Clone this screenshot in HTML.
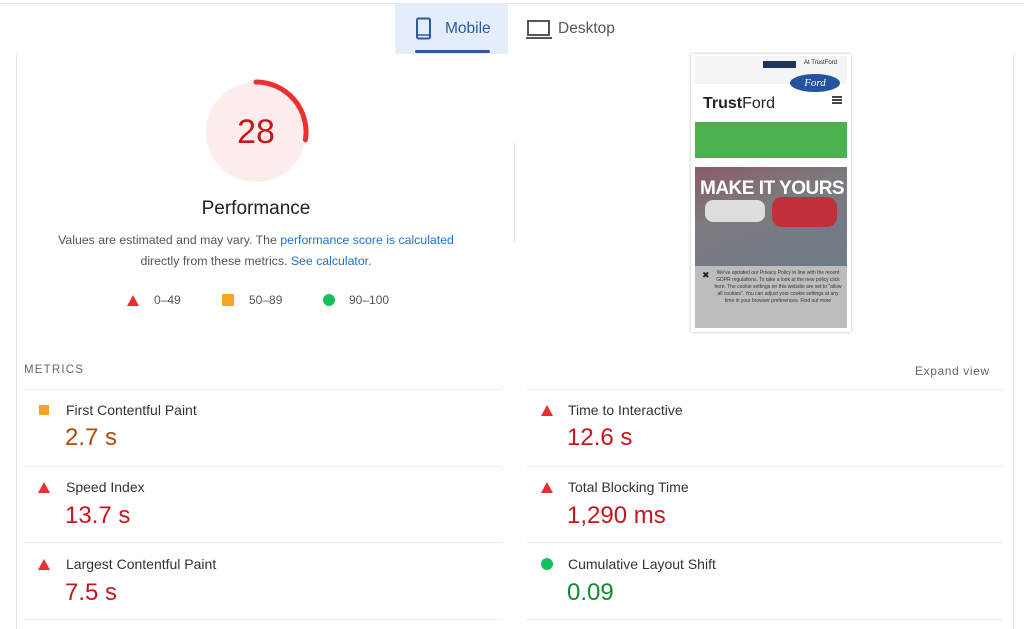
<!DOCTYPE html>
<html><head><style>
body{margin:0;width:1024px;height:629px;background:#fff;position:relative;overflow:hidden;font-family:"Liberation Sans",Arial,sans-serif;}
.a{position:absolute;}
.sep{position:absolute;height:1px;background:#ececec;}
.lbl{position:absolute;font-size:14px;color:#333;}
.val{position:absolute;font-size:24px;}
.red{color:#c5161d}.org{color:#b4470c}.grn{color:#118a2f}
.tri{position:absolute;width:0;height:0;border-left:6px solid transparent;border-right:6px solid transparent;border-bottom:11px solid #eb2f2f;}
</style></head><body>
<div class="a" style="left:0;top:3px;width:1024px;height:1px;background:#e6e6e6"></div>
<div class="a" style="left:16px;top:54px;width:1px;height:575px;background:#e8e8e8"></div>
<div class="a" style="left:1013px;top:54px;width:1px;height:575px;background:#e8e8e8"></div>
<!-- tabs -->
<div class="a" style="left:395px;top:4px;width:113px;height:50px;background:#e4eefa"></div>
<div class="a" style="left:415px;top:50px;width:75px;height:3px;background:#2d5a9e;border-radius:2px"></div>
<svg class="a" style="left:415px;top:17px" width="18" height="24" viewBox="0 0 18 24"><rect x="2" y="1.5" width="13" height="20" rx="1.5" fill="none" stroke="#2d5a9e" stroke-width="2"/><line x1="2" y1="18" x2="15" y2="18" stroke="#2d5a9e" stroke-width="1.5"/></svg>
<div class="a" style="left:445px;top:20px;font-size:15.5px;color:#2d5a9e">Mobile</div>
<svg class="a" style="left:526px;top:20px" width="26" height="20" viewBox="0 0 26 20"><rect x="2" y="1" width="21" height="14" fill="none" stroke="#555" stroke-width="2"/><line x1="0" y1="18" x2="26" y2="18" stroke="#555" stroke-width="2"/></svg>
<div class="a" style="left:558px;top:20px;font-size:15.5px;color:#555">Desktop</div>
<!-- gauge -->
<svg class="a" style="left:200px;top:76px" width="112" height="112" viewBox="0 0 112 112"><circle cx="56" cy="56" r="50" fill="#fdecec"/><path d="M56 6 A50 50 0 0 1 105.4 63.8" fill="none" stroke="#eb2f2f" stroke-width="5" stroke-linecap="round"/></svg>
<div class="a" style="left:206px;top:113px;width:100px;text-align:center;font-size:34px;color:#c5161d">28</div>
<div class="a" style="left:156px;top:198px;width:200px;text-align:center;font-size:19px;color:#222">Performance</div>
<div class="a" style="left:40px;top:230px;width:432px;text-align:center;font-size:12.3px;color:#555;line-height:21px">Values are estimated and may vary. The <span style="color:#1a73c8">performance score is calculated</span><br>directly from these metrics. <span style="color:#1a73c8">See calculator</span>.</div>
<div class="tri" style="left:127px;top:295px"></div>
<div class="a" style="left:154px;top:293px;font-size:12px;color:#555">0–49</div>
<div class="a" style="left:222px;top:294px;width:12px;height:12px;background:#f4a524"></div>
<div class="a" style="left:249px;top:293px;font-size:12px;color:#555">50–89</div>
<div class="a" style="left:323px;top:294px;width:12px;height:12px;border-radius:50%;background:#13c05a"></div>
<div class="a" style="left:349px;top:293px;font-size:12px;color:#555">90–100</div>
<div class="a" style="left:514px;top:143px;width:1px;height:100px;background:#e0e0e0"></div>
<!-- screenshot -->
<div class="a" style="left:691px;top:54px;width:160px;height:278px;background:#fff;box-shadow:0 0 3px #bbb"></div>
<div class="a" style="left:695px;top:56px;width:152px;height:28px;background:#f4f4f4"></div>
<div class="a" style="left:763px;top:61px;width:33px;height:7px;background:#1f3458"></div>
<div class="a" style="left:804px;top:60px;font-size:6px;color:#222">At TrustFord</div>
<div class="a" style="left:790px;top:74px;width:50px;height:18px;border-radius:50%;background:#2453a0;color:#fff;font-size:11px;font-style:italic;text-align:center;line-height:18px;font-family:'Liberation Serif',serif">Ford</div>
<div class="a" style="left:703px;top:95px;font-size:16px;color:#222"><b>Trust</b>Ford</div>
<div class="a" style="left:832px;top:96px;width:10px;height:2px;background:#444;box-shadow:0 3px 0 #444,0 6px 0 #444"></div>
<div class="a" style="left:695px;top:122px;width:152px;height:36px;background:#4caf50"></div>
<div class="a" style="left:695px;top:167px;width:152px;height:99px;background:linear-gradient(160deg,#8a5a6a 0%,#7d7a80 40%,#6d7b88 100%)"></div>
<div class="a" style="left:700px;top:178px;font-size:19px;font-weight:bold;color:#fff;letter-spacing:-0.5px">MAKE IT YOURS</div>
<div class="a" style="left:705px;top:200px;width:60px;height:22px;background:#ddd;border-radius:8px"></div>
<div class="a" style="left:772px;top:197px;width:65px;height:30px;background:#c0303a;border-radius:10px"></div>
<div class="a" style="left:695px;top:266px;width:152px;height:62px;background:#bdbdbd"></div>
<div class="a" style="left:702px;top:270px;font-size:9px;color:#222">✖</div>
<div class="a" style="left:714px;top:270px;width:128px;font-size:5px;color:#333;text-align:center;line-height:7px">We've updated our Privacy Policy in line with the recent GDPR regulations. To take a look at the new policy click here. The cookie settings on this website are set to "allow all cookies". You can adjust your cookie settings at any time in your browser preferences. Find out more</div>
<!-- metrics -->
<div class="a" style="left:24px;top:364px;font-size:11.5px;color:#666;letter-spacing:1.2px">METRICS</div>
<div class="a" style="left:915px;top:364px;font-size:12px;color:#666;letter-spacing:0.6px">Expand view</div>
<div class="sep" style="left:24px;top:389px;width:478px"></div>
<div class="sep" style="left:24px;top:466px;width:478px"></div>
<div class="sep" style="left:24px;top:542px;width:478px"></div>
<div class="sep" style="left:24px;top:619px;width:478px"></div>
<div class="sep" style="left:527px;top:389px;width:476px"></div>
<div class="sep" style="left:527px;top:466px;width:476px"></div>
<div class="sep" style="left:527px;top:542px;width:476px"></div>
<div class="sep" style="left:527px;top:619px;width:476px"></div>

<div class="a" style="left:39px;top:405px;width:10px;height:10px;background:#f4a524"></div>
<div class="lbl" style="left:66px;top:402px">First Contentful Paint</div>
<div class="val org" style="left:65px;top:424px">2.7 s</div>
<div class="tri" style="left:38px;top:482px"></div>
<div class="lbl" style="left:66px;top:479px">Speed Index</div>
<div class="val red" style="left:65px;top:502px">13.7 s</div>
<div class="tri" style="left:38px;top:559px"></div>
<div class="lbl" style="left:66px;top:556px">Largest Contentful Paint</div>
<div class="val red" style="left:65px;top:579px">7.5 s</div>

<div class="tri" style="left:541px;top:405px"></div>
<div class="lbl" style="left:568px;top:402px">Time to Interactive</div>
<div class="val red" style="left:567px;top:424px">12.6 s</div>
<div class="tri" style="left:541px;top:482px"></div>
<div class="lbl" style="left:568px;top:479px">Total Blocking Time</div>
<div class="val red" style="left:567px;top:502px">1,290 ms</div>
<div class="a" style="left:541px;top:558px;width:12px;height:12px;border-radius:50%;background:#13c05a"></div>
<div class="lbl" style="left:568px;top:556px">Cumulative Layout Shift</div>
<div class="val grn" style="left:567px;top:579px">0.09</div>
</body></html>
